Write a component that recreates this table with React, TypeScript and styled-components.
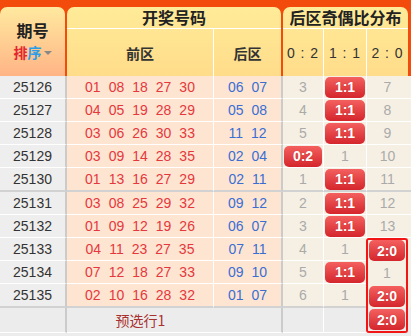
import React from 'react';
import styled, { createGlobalStyle } from 'styled-components';

type Draw = { issue: string; front: string[]; back: string[]; ratio: [string, string, string] };

const draws: Draw[] = [
  { issue: '25126', front: ['01', '08', '18', '27', '30'], back: ['06', '07'], ratio: ['3', '1:1', '7'] },
  { issue: '25127', front: ['04', '05', '19', '28', '29'], back: ['05', '08'], ratio: ['4', '1:1', '8'] },
  { issue: '25128', front: ['03', '06', '26', '30', '33'], back: ['11', '12'], ratio: ['5', '1:1', '9'] },
  { issue: '25129', front: ['03', '09', '14', '28', '35'], back: ['02', '04'], ratio: ['0:2', '1', '10'] },
  { issue: '25130', front: ['01', '13', '16', '27', '29'], back: ['02', '11'], ratio: ['1', '1:1', '11'] },
  { issue: '25131', front: ['03', '08', '25', '29', '32'], back: ['09', '12'], ratio: ['2', '1:1', '12'] },
  { issue: '25132', front: ['01', '09', '12', '19', '26'], back: ['06', '07'], ratio: ['3', '1:1', '13'] },
  { issue: '25133', front: ['04', '11', '23', '27', '35'], back: ['07', '11'], ratio: ['4', '1', '2:0'] },
  { issue: '25134', front: ['07', '12', '18', '27', '33'], back: ['09', '10'], ratio: ['5', '1:1', '1'] },
  { issue: '25135', front: ['02', '10', '16', '28', '32'], back: ['01', '07'], ratio: ['6', '1', '2:0'] },
];

// rows of the 2:0 column that sit inside the red pick frame
const MARK_FROM = 7;

const GlobalStyle = createGlobalStyle`
  body {
    margin: 0;
    background: #ececec;
    font-family: "Liberation Sans", "Noto Sans CJK SC", sans-serif;
  }
`;

const Page = styled.div`
  width: 411px;
  height: 336px;
  overflow: hidden;
  background: #ececec;
`;

const Head = styled.div`
  display: flex;
  box-sizing: border-box;
  height: 76px;
  padding-top: 7px;
  background: #f24b0b;
`;

const HeadCell = styled.div<{ $w: number; $gap?: number }>`
  display: flex;
  flex-direction: column;
  width: ${p => p.$w}px;
  margin-right: ${p => p.$gap ?? 0}px;
  border-radius: 7px 7px 0 0;
  background: linear-gradient(#ffeb98, #ffdc8a);
  font-family: "Noto Sans CJK SC", sans-serif;
  color: #222;
`;

const IssueHead = styled(HeadCell)`
  align-items: center;
  justify-content: center;
  gap: 2px;
  background: linear-gradient(#ffe99f, #ffb486);
  font-family: "Liberation Sans", "Noto Sans CJK SC", sans-serif;
`;

const HeadTitle = styled.div`
  height: 21px;
  line-height: 21px;
  border-bottom: 1px solid #fff;
  text-align: center;
  font-size: 16px;
  font-weight: bold;
  white-space: nowrap;
`;

const BigTitle = styled.div`
  font-size: 16px;
  font-weight: bold;
  line-height: 20px;
`;

const Sort = styled.div`
  display: flex;
  align-items: center;
  font-size: 14px;
  font-weight: bold;
  line-height: 18px;
`;

const SortChar = styled.span<{ $c: string }>`
  color: ${p => p.$c};
`;

const Caret = styled.span`
  margin-left: 2px;
  border-left: 4px solid transparent;
  border-right: 4px solid transparent;
  border-top: 4px solid #888;
`;

const SubRow = styled.div`
  display: flex;
  flex: 1;
`;

const SubCell = styled.div<{ $w?: number; $last?: boolean; $light?: boolean }>`
  display: flex;
  align-items: center;
  justify-content: center;
  ${p => (p.$w ? `width: ${p.$w}px;` : 'flex: 1;')}
  border-right: ${p => (p.$last ? 'none' : '1px solid #fff')};
  font-size: 14px;
  font-weight: ${p => (p.$light ? 'normal' : 'bold')};
  font-family: ${p => (p.$light ? '"Liberation Sans", sans-serif' : 'inherit')};
  letter-spacing: ${p => (p.$light ? '1px' : '0')};
  color: #333;
`;

const Row = styled.div<{ $h: number }>`
  display: grid;
  grid-template-columns: 67px 147px 69px 41px 43px 44px;
  height: ${p => p.$h}px;
`;

const Cell = styled.div<{ $end: 'thin' | 'group' }>`
  box-sizing: border-box;
  display: flex;
  align-items: center;
  justify-content: center;
  border-bottom: ${p => (p.$end === 'group' ? '2px solid #d2d2d2' : '1px solid #fff')};
  font-size: 14px;
`;

const IssueCell = styled(Cell)<{ $gray?: boolean }>`
  background: ${p => (p.$gray ? '#ececec' : '#efeeee')};
  border-right: 2px solid #cbcbcb;
  color: #333;
`;

const BallCell = styled(Cell)<{ $blue?: boolean; $gray?: boolean }>`
  gap: 8px;
  background: ${p => (p.$gray ? '#ececec' : '#fee5d2')};
  border-right: ${p => (p.$blue ? '2px solid #cbcbcb' : p.$gray ? 'none' : '1px solid #fff')};
  color: ${p => (p.$blue ? '#3b6ed2' : '#e5383d')};
`;

const PickText = styled.span`
  font-family: "Noto Sans CJK SC", sans-serif;
  color: #a8312f;
  font-size: 14px;
`;

const RatioCell = styled(Cell)<{ $gray?: boolean }>`
  background: ${p => (p.$gray ? '#ececec' : '#f6f0e4')};
  border-right: 1px solid #fff;
  color: #aaa;
`;

const LastCell = styled(Cell)<{ $gray?: boolean; $marked?: boolean }>`
  align-items: stretch;
  padding-right: 3px;
  background: ${p => (p.$gray ? '#ececec' : '#f6f0e4')};
  ${p => (p.$marked ? 'border-bottom: none;' : '')}
  color: #aaa;
`;

const Slot = styled.div<{ $mark?: 'top' | 'mid' | 'bottom' }>`
  flex: 1;
  display: flex;
  align-items: center;
  justify-content: center;
  box-sizing: border-box;
  ${p =>
    p.$mark
      ? `border-left: 2px solid #f21515; border-right: 2px solid #f21515; margin-left: -1px;`
      : ''}
  ${p => (p.$mark === 'top' ? 'border-top: 2px solid #f21515; border-radius: 3px 3px 0 0;' : '')}
  ${p => (p.$mark === 'bottom' ? 'border-bottom: 2px solid #f21515; border-radius: 0 0 3px 3px;' : '')}
`;

const Badge = styled.span`
  display: flex;
  align-items: center;
  justify-content: center;
  width: calc(100% - 2px);
  height: 21px;
  border-radius: 5px;
  background: linear-gradient(#f4605f, #d4262c);
  color: #fff;
  font-size: 14px;
  font-weight: bold;
  text-shadow: 0 0 1px rgba(120, 0, 0, 0.4);
`;

const Filler = styled.div`
  height: 4px;
  background: #ececec;
`;

function Ratio({ value }: { value: string }) {
  return value.includes(':') ? <Badge>{value}</Badge> : <>{value}</>;
}

function markOf(i: number, total: number): 'top' | 'mid' | 'bottom' | undefined {
  if (i < MARK_FROM) return undefined;
  if (i === MARK_FROM) return 'top';
  if (i === total - 1) return 'bottom';
  return 'mid';
}

export default function App() {
  const total = draws.length + 1;
  return (
    <Page>
      <GlobalStyle />
      <Head>
        <IssueHead $w={65} $gap={2}>
          <BigTitle>期号</BigTitle>
          <Sort>
            <SortChar $c="#e2262e">排</SortChar>
            <SortChar $c="#2b9de6">序</SortChar>
            <Caret />
          </Sort>
        </IssueHead>
        <HeadCell $w={214} $gap={2}>
          <HeadTitle>开奖号码</HeadTitle>
          <SubRow>
            <SubCell $w={146}>前区</SubCell>
            <SubCell $last>后区</SubCell>
          </SubRow>
        </HeadCell>
        <HeadCell $w={125}>
          <HeadTitle>后区奇偶比分布</HeadTitle>
          <SubRow>
            <SubCell $w={40} $light>0 : 2</SubCell>
            <SubCell $w={42} $light>1 : 1</SubCell>
            <SubCell $light $last>2 : 0</SubCell>
          </SubRow>
        </HeadCell>
      </Head>

      {draws.map((d, i) => {
        const end = i % 5 === 4 ? 'group' : 'thin';
        const mark = markOf(i, total);
        return (
          <Row key={d.issue} $h={end === 'group' ? 24 : 23}>
            <IssueCell $end={end}>{d.issue}</IssueCell>
            <BallCell $end={end}>
              {d.front.map((n, k) => (
                <span key={k}>{n}</span>
              ))}
            </BallCell>
            <BallCell $end={end} $blue>
              {d.back.map((n, k) => (
                <span key={k}>{n}</span>
              ))}
            </BallCell>
            <RatioCell $end={end}>
              <Ratio value={d.ratio[0]} />
            </RatioCell>
            <RatioCell $end={end}>
              <Ratio value={d.ratio[1]} />
            </RatioCell>
            <LastCell $end={end} $marked={!!mark}>
              <Slot $mark={mark}>
                <Ratio value={d.ratio[2]} />
              </Slot>
            </LastCell>
          </Row>
        );
      })}

      <Row $h={25}>
        <IssueCell $end="thin" $gray />
        <BallCell $end="thin" $gray>
          <PickText>预选行1</PickText>
        </BallCell>
        <BallCell $end="thin" $gray $blue />
        <RatioCell $end="thin" $gray />
        <RatioCell $end="thin" $gray />
        <LastCell $end="thin" $gray $marked>
          <Slot $mark="bottom">
            <Badge>2:0</Badge>
          </Slot>
        </LastCell>
      </Row>
      <Filler />
    </Page>
  );
}
